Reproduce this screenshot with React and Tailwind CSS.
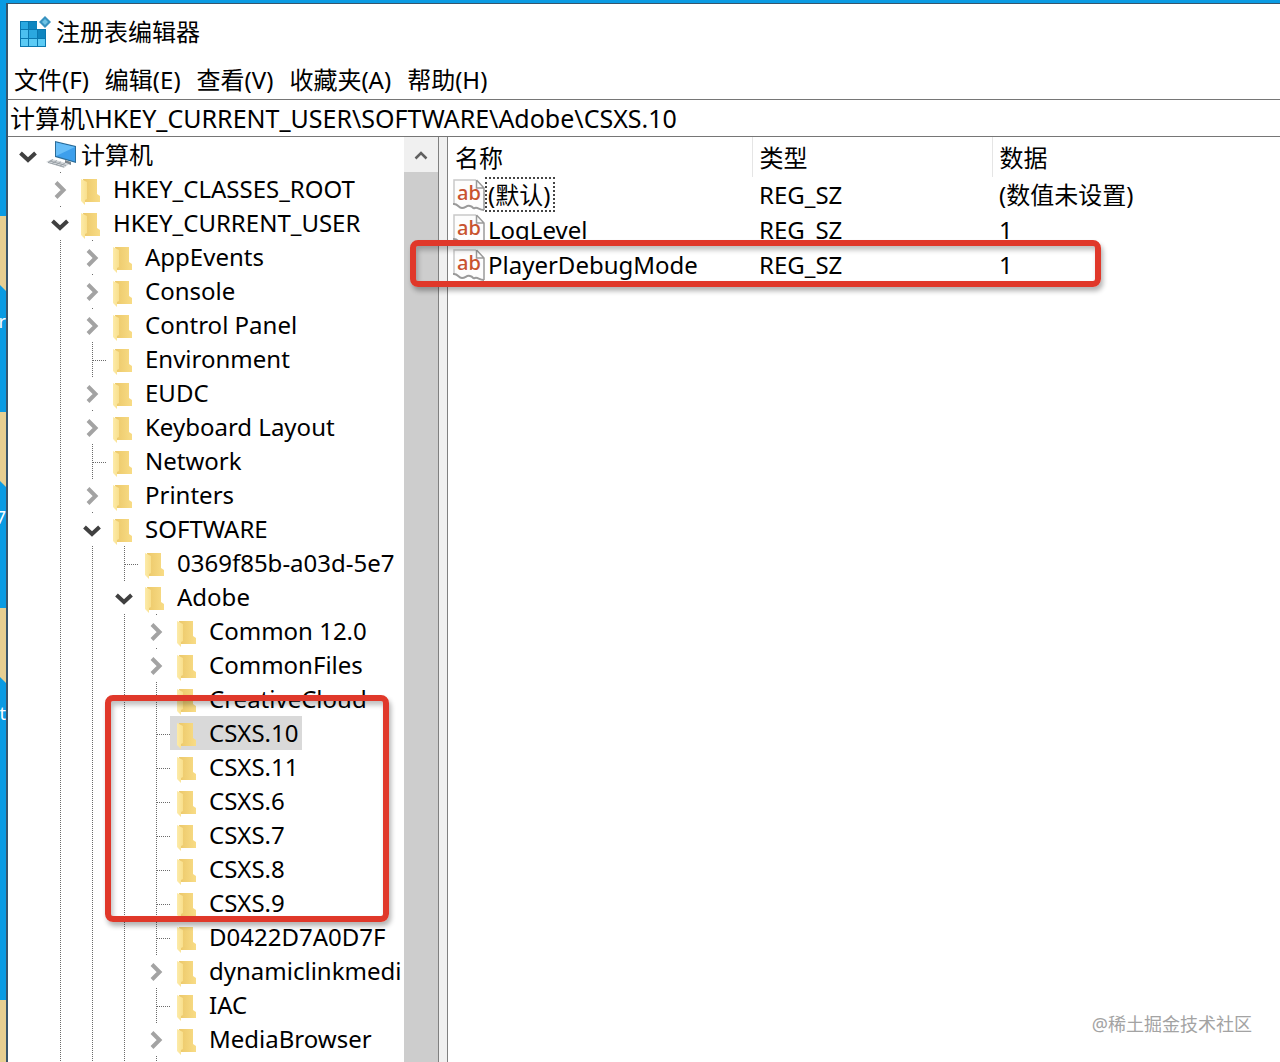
import { useState } from "react";

const menus = ["文件(F)", "编辑(E)", "查看(V)", "收藏夹(A)", "帮助(H)"];

// state: "open" | "closed" | "leaf"
const keys = [
  { name: "HKEY_CLASSES_ROOT", level: 1, state: "closed" },
  { name: "HKEY_CURRENT_USER", level: 1, state: "open" },
  { name: "AppEvents", level: 2, state: "closed" },
  { name: "Console", level: 2, state: "closed" },
  { name: "Control Panel", level: 2, state: "closed" },
  { name: "Environment", level: 2, state: "leaf" },
  { name: "EUDC", level: 2, state: "closed" },
  { name: "Keyboard Layout", level: 2, state: "closed" },
  { name: "Network", level: 2, state: "leaf" },
  { name: "Printers", level: 2, state: "closed" },
  { name: "SOFTWARE", level: 2, state: "open" },
  { name: "0369f85b-a03d-5e7", level: 3, state: "leaf" },
  { name: "Adobe", level: 3, state: "open" },
  { name: "Common 12.0", level: 4, state: "closed" },
  { name: "CommonFiles", level: 4, state: "closed" },
  { name: "CreativeCloud", level: 4, state: "leaf" },
  { name: "CSXS.10", level: 4, state: "leaf" },
  { name: "CSXS.11", level: 4, state: "leaf" },
  { name: "CSXS.6", level: 4, state: "leaf" },
  { name: "CSXS.7", level: 4, state: "leaf" },
  { name: "CSXS.8", level: 4, state: "leaf" },
  { name: "CSXS.9", level: 4, state: "leaf" },
  { name: "D0422D7A0D7F", level: 4, state: "leaf" },
  { name: "dynamiclinkmedi", level: 4, state: "closed" },
  { name: "IAC", level: 4, state: "leaf" },
  { name: "MediaBrowser", level: 4, state: "closed" },
  { name: "", level: 4, state: "leaf" },
];

const values = [
  { name: "(默认)", type: "REG_SZ", data: "(数值未设置)", focused: true },
  { name: "LogLevel", type: "REG_SZ", data: "1" },
  { name: "PlayerDebugMode", type: "REG_SZ", data: "1" },
];

function RegeditIcon() {
  return (
    <svg width="32" height="32" viewBox="0 0 32 32">
      <path d="M0 5h17v8h9v18H0z" fill="#0a78b0" />
      <path d="M1 6h7v7H1z" fill="#2ba8e0" />
      <path d="M9 6h8v7H9z" fill="#0f86c0" />
      <path d="M1 14h7v8H1z" fill="#4cc0f0" />
      <path d="M9 14h8v8H9z" fill="#2ba8e0" />
      <path d="M18 14h7v8h-7z" fill="#0f86c0" />
      <path d="M1 23h7v7H1zM9 23h8v7H9zM18 23h7v7h-7z" fill="#5ccbf5" />
      <path d="M25 0l6 6-6 6-6-6z" fill="#3792c0" />
      <path d="M25 3l3 3-3 3-3-3z" fill="#6fc3e6" />
    </svg>
  );
}

function ComputerIcon() {
  return (
    <svg width="32" height="32" viewBox="0 0 32 32">
      <path d="M9 2l21 5v17L9 18z" fill="#2b6c98" />
      <path d="M10 3.500l19 4.500v14.500L10 17z" fill="#3d9fec" />
      <path d="M10 3.500l19 4.500-19 9z" fill="#66bdf8" />
      <path d="M19 21l6 2v3l-6-2z" fill="#7d868d" />
      <path d="M0 23l6-3 17 5-5 4z" fill="#d3d7da" />
      <path
        d="M2 23.500l16 4.500M4 22l16 4.500M7 20.500l-5 3M11 21.500l-5 3M15 22.800l-5 3M19 24l-5 3"
        fill="none"
        stroke="#8f979d"
        strokeWidth=".8"
      />
    </svg>
  );
}

function FolderIcon() {
  return (
    <svg width="20" height="28" viewBox="0 0 20 28">
      <defs>
        <linearGradient id="folderBack" x1="0" x2="1">
          <stop offset="0" stopColor="#ecc869" />
          <stop offset="1" stopColor="#f8dc86" />
        </linearGradient>
        <linearGradient id="folderFlap" x1="0" x2="1">
          <stop offset="0" stopColor="#fdeba9" />
          <stop offset="1" stopColor="#f8df8c" />
        </linearGradient>
      </defs>
      <path d="M2 2h14v15l3 2v6H4z" fill="url(#folderBack)" />
      <path d="M0 2l6 3v17l-2 1v5l-4-4z" fill="url(#folderFlap)" />
    </svg>
  );
}

function StringIcon() {
  return (
    <svg width="32" height="34" viewBox="0 0 32 34">
      <path d="M1 2h22l8 8v21l-5-2-5 1-4-2-5 2-5-3H1z" fill="#fdfdfd" />
      <path d="M1 27V2h22" fill="none" stroke="#c9c9c9" strokeWidth="1.500" />
      <path d="M23.500 2v8h7M23.500 2l7.500 8v22" fill="none" stroke="#9a9a9a" strokeWidth="1.500" />
      <path
        d="M0 26c5-1 5 4 9 4s4-3 8-2 2 3 5 2 4 2 9 2"
        fill="none"
        stroke="#9a9a9a"
        strokeWidth="2"
      />
      <text
        x="4"
        y="22"
        fontSize="20"
        fontWeight="500"
        fill="#c8532f"
        fontFamily="Noto Sans, sans-serif"
      >
        ab
      </text>
    </svg>
  );
}

// One 32px step of the tree: dotted guide, branch or arrow
function Step({ kind, root = false }) {
  return (
    <svg width="32" height="34" viewBox="0 0 32 34" className="shrink-0">
      {(kind === "line" || kind === "leaf") && (
        <path d="M18.500 0v34" stroke="#6b6b6b" strokeDasharray="1 1" />
      )}
      {kind === "leaf" && <path d="M19 18.500h13" stroke="#6b6b6b" strokeDasharray="1 1" />}
      {!root && (kind === "open" || kind === "closed") && (
        <path d="M18 .5h1" stroke="#6b6b6b" />
      )}
      {kind === "open" && (
        <path d="M10.500 15l7.500 7 7.500-7" fill="none" stroke="#404040" strokeWidth="4" />
      )}
      {kind === "closed" && (
        <path d="M14 10.500l7.500 7.500-7.500 7.500" fill="none" stroke="#a3a3a3" strokeWidth="4" />
      )}
    </svg>
  );
}

function TreeRow({ item, selected, onSelect }) {
  // the first step never carries a guide, the next ones follow the open parents
  const guides = Array.from({ length: item.level }, (_, i) => (i === 0 ? "blank" : "line"));

  return (
    <li className="flex h-[34px]">
      {guides.map((kind, i) => (
        <Step key={i} kind={kind} />
      ))}
      <Step kind={item.state} />
      <button
        type="button"
        onClick={onSelect}
        className={`flex h-[34px] shrink-0 items-center whitespace-nowrap pl-[7px] pr-1 ${selected ? "bg-[#d9d9d9]" : ""}`}
      >
        <span className="w-8 shrink-0 pt-1">
          <FolderIcon />
        </span>
        {item.name}
      </button>
    </li>
  );
}

function DesktopItem({ letter }) {
  return (
    <div className="h-[196px] shrink-0">
      <div className="h-[75px] bg-[#e6cf92] [clip-path:polygon(0_0,100%_0,100%_100%,0_92%)]" />
      <div className="flex justify-end pt-[18px] text-lg leading-6 text-white">{letter}</div>
    </div>
  );
}

export default function App() {
  const [selected, setSelected] = useState("CSXS.10");

  return (
    <div className="flex h-screen overflow-hidden bg-[#0a9be3] font-['Noto_Sans','Noto_Sans_CJK_SC',sans-serif] text-2xl text-black">
      {/* Desktop behind the window */}
      <div className="flex w-[6px] shrink-0 flex-col overflow-hidden pt-[216px]">
        <DesktopItem letter="r" />
        <DesktopItem letter="7" />
        <DesktopItem letter="t" />
        <div className="h-[196px] shrink-0" />
        <DesktopItem letter="" />
      </div>

      {/* Window */}
      <div className="relative mt-[3px] flex min-w-0 flex-1 flex-col border-l-2 border-t border-[#38556b] bg-white">
        <header className="flex h-14 shrink-0 items-center gap-1 pl-3">
          <RegeditIcon />
          <h1>注册表编辑器</h1>
        </header>

        <nav className="flex h-[39px] shrink-0 items-center gap-4 pl-[6px]">
          {menus.map((menu) => (
            <button key={menu} type="button" className="whitespace-nowrap">
              {menu}
            </button>
          ))}
        </nav>

        <input
          type="text"
          aria-label="地址"
          defaultValue="计算机\HKEY_CURRENT_USER\SOFTWARE\Adobe\CSXS.10"
          className="h-[38px] shrink-0 border-y border-[#767676] bg-white px-[2px] pb-[3px] text-[25px] outline-none"
        />

        <main className="flex min-h-0 flex-1">
          {/* Key tree */}
          <div className="w-[396px] shrink-0 overflow-hidden pl-[2px] pt-px">
            <div className="flex h-[34px] items-center">
              <Step kind="open" root />
              <span className="w-[39px] shrink-0 pl-1">
                <ComputerIcon />
              </span>
              计算机
            </div>
            <ul>
              {keys.map((item) => (
                <TreeRow
                  key={item.name}
                  item={item}
                  selected={item.name === selected}
                  onSelect={() => setSelected(item.name)}
                />
              ))}
            </ul>
          </div>

          {/* Scrollbar */}
          <div className="flex w-[34px] shrink-0 flex-col bg-[#cdcdcd]">
            <button
              type="button"
              aria-label="向上滚动"
              className="flex h-[35px] items-center justify-center bg-[#f0f0f0]"
            >
              <svg width="14" height="10" viewBox="0 0 14 10">
                <path
                  d="M1.500 8.500L7 3l5.500 5.500"
                  fill="none"
                  stroke="#606060"
                  strokeWidth="2.500"
                />
              </svg>
            </button>
          </div>
          <div className="w-[10px] shrink-0 border-x border-[#808080] bg-[#f0f0f0]" />

          {/* Values */}
          <div className="min-w-0 flex-1 overflow-hidden">
            <table className="w-full table-fixed border-collapse text-left">
              <colgroup>
                <col className="w-[304px]" />
                <col className="w-[240px]" />
                <col />
              </colgroup>
              <thead>
                <tr className="h-10">
                  <th className="border-r border-[#e5e5e5] p-0 pl-[7px] pt-[2px] font-normal">
                    名称
                  </th>
                  <th className="border-r border-[#e5e5e5] p-0 pl-[7px] pt-[2px] font-normal">
                    类型
                  </th>
                  <th className="p-0 pl-[7px] pt-[2px] font-normal">数据</th>
                </tr>
              </thead>
              <tbody>
                {values.map((value) => (
                  <tr key={value.name} className="h-[35px]">
                    <td className="p-0 pl-[5px]">
                      <div className="flex h-[35px] items-center">
                        <StringIcon />
                        <span
                          className={`flex h-[35px] items-center border-2 border-dotted pl-px pr-[3px] ${value.focused ? "border-[#444]" : "border-transparent"}`}
                        >
                          {value.name}
                        </span>
                      </div>
                    </td>
                    <td className="p-0 pl-[7px]">{value.type}</td>
                    <td className="p-0 pl-[7px]">{value.data}</td>
                  </tr>
                ))}
              </tbody>
            </table>
          </div>
        </main>

        {/* Highlight frames */}
        <div className="pointer-events-none absolute left-[402px] top-[236px] h-[47px] w-[691px] rounded-lg border-[6px] border-[#e0382a] shadow-[2px_4px_5px_rgba(0,0,0,0.3),inset_2px_4px_5px_rgba(0,0,0,0.25)]" />
        <div className="pointer-events-none absolute left-[97px] top-[691px] h-[227px] w-[284px] rounded-lg border-[6px] border-[#e0382a] shadow-[2px_4px_5px_rgba(0,0,0,0.3),inset_2px_4px_5px_rgba(0,0,0,0.25)]" />

        <p className="absolute bottom-6 right-7 text-lg text-[#a3a3a3]">@稀土掘金技术社区</p>
      </div>
    </div>
  );
}
